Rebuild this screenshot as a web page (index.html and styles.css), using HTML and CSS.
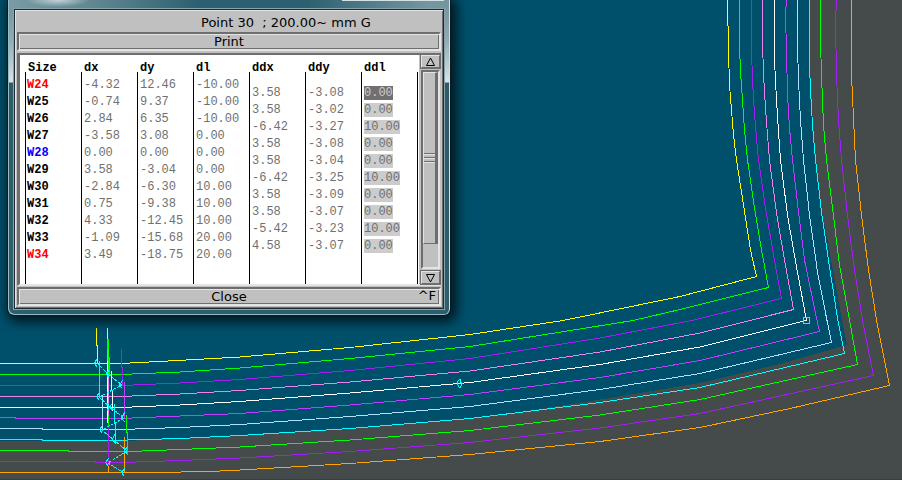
FILE: index.html
```html
<!DOCTYPE html>
<html lang="en">
<head>
    <meta charset="UTF-8">
    <meta name="viewport" content="width=device-width, initial-scale=1.0">
    <title>Point 30</title>
    <link rel="stylesheet" href="styles.css">
</head>
<body>
    <main class="workspace">
        <svg class="drawing" viewBox="0 0 902 480" preserveAspectRatio="xMinYMin slice" role="img" aria-label="Graded pattern">
            <path class="piece" d="M0 441H125L240 436L350 429L470 419L540 409L610 398L700 383L780 364L847 345L842 320L832 265L822 210L815 160L811 110L810 70V0H0Z"/>
            <path class="edge" d="M0 479.5H902"/>
            <g class="sizes">
                <path class="yellow" d="M0 363.5H121L168 361L240 357L350 347.500L470 334.500L563 320.500L680 296.500L756.500 276.500L750.500 250L743.500 205L736.500 160L733.500 135L731.500 110L729.500 85L728.500 50L727.500 0"/>
                <path class="green" d="M0 374.5H120L180 372L240 368L350 358.500L470 346.500L633 320.500L680 309.500L768.500 287.500L761.500 250L754.500 208L747.500 160L744.500 130L742.500 100L740.500 72L739.500 45V0"/>
                <path class="purple" d="M0 385.5H121L180 383L240 379.500L350 370.500L470 358.500L600 338L692 320.500L781.500 298.500L773.500 255L765.500 208L758.500 160L756.500 138L754.500 114L752.500 80L751.500 50V0"/>
                <path class="pink" d="M0 396.5H120L180 394L240 390.500L350 382L470 371L600 352L700 333L793.500 309.500L784.500 260L776.500 213L769.500 160L767.500 135L765.500 108L763.500 75L762.500 40V0"/>
                <path class="white" d="M0 407.5H120L180 405L240 401.500L350 393L470 382.500L600 364.500L700 347L806.500 320.500L796.500 267L787.500 215L780.500 160L778.500 132L776.500 100L774.500 60V0"/>
                <path class="violet" d="M0 417.5H15L16 418.5H120L180 416L240 413.500L350 405L470 394.500L600 377.500L700 360.500L819.500 331.500L816.500 318L804.500 260L798.500 212L792.500 160L789.500 128L787.500 95L786.500 50L785.500 15L786.500 0"/>
                <path class="sky" d="M0 428.500H42L43 429.500H120L180 427.500L240 424.500L350 416.500L470 406.500L600 389.500L700 373.500L831.500 342.500L826.500 318L817.500 272L809.500 215L803.500 160L800.500 120L798.500 80L797.500 45V0"/>
                <path class="cyan" d="M0 439.500H42L43 440.500H110L180 438.500L240 435.500L350 428.500L470 418.500L600 402.500L700 387.500L844.500 353.500L837.500 318L829.500 267L821.500 212L815.500 160L812.500 125L810.500 90L809.500 65V0"/>
                <path class="green" d="M0 450.500H68L69 451.500H130L180 449.500L240 447L350 440L470 430.500L600 415L700 399.500L857.500 364.500L849.500 320L839.500 265L832.500 208L826.500 160L823.500 125L821.500 75L820.500 40V0"/>
                <path class="purple" d="M0 461.500H95L96 462.500H121L180 460.500L240 458L350 451.500L470 442.500L600 428L700 413.500L780 396L873.500 375.500L862.500 320L854.500 270L847.500 215L841.500 160L838.500 120L836.500 75L835.500 22L836.500 0"/>
                <path class="orange" d="M0 472.500H152L210 471.500L240 470L350 463.500L470 454.500L600 441.500L700 427.500L790 408.500L889.500 385.500L876.500 320L868.500 270L861.500 215L855.500 160L853.500 118L851.500 75V0"/>
            </g>
            <!-- sizes at the notch -->
            <g class="notches">
                <path class="yellow" d="M96.500 328V345L97.500 346V363M107.500 328V340"/>
                <path class="pink" d="M107.500 350V361M99.500 361V397M108.500 375V425"/>
                <path class="white" d="M107.500 361V423M111.500 371V390L112.500 391V411"/>
                <path class="green" d="M107.500 339V350M108.500 339V375M109.500 357V375M108.500 416V425M126.500 415V432L127.500 433V455"/>
                <path class="purple" d="M121.500 349V367L122.500 368V386M108.500 425V466"/>
                <path class="violet" d="M124.500 382V418"/>
                <path class="sky" d="M102.500 395V431"/>
                <path class="cyan" d="M114.500 404V422L115.500 423V444"/>
                <path class="orange" d="M124.500 437V473M108.500 466V472"/>
                <path class="cyan dashed" d="M97 363L108 374L122 385L99 397L110 407L124 418L102 430L114 440L127 451L108 463L124 473"/>
                <path class="cyan" d="M96.500 359.500L94.500 363.500L97.500 367.500M108.500 370.500L106.500 374.500L109.500 378.500M122.500 380.500L119.500 385.500L122.500 388.500M99.500 392.500L96.500 396.500L99.500 400.500M107.500 403.500L109.500 407.500L106.500 411.500M111.500 404.500L109.500 407.500L112.500 410.500M124.500 412.500L121.500 418.500L125.500 422.500M102.500 425.500L99.500 429.500L102.500 433.500M114.500 434.500L112.500 439.500L115.500 443.500M127.500 446.500L124.500 450.500L127.500 454.500M108.500 458.500L105.500 462.500L108.500 466.500M124.500 468.500L121.500 472.500L124.500 476.500"/>
                <path class="cyan" d="M459.500 379.500H460.500V382.500L462.500 383.500L460.500 386.500V387.500H459.500L457.500 384.500V381.500Z"/>
                <rect class="cyan" x="803.500" y="317.500" width="6" height="6"/>
            </g>
        </svg>

        <section class="window" aria-label="Point 30">
            <div class="panel">
                <h1 class="title">Point 30&nbsp; ; 200.00~ mm G</h1>
                <button class="bar-button" type="button">Print</button>
                <div class="list">
                    <div class="sheet">
                        <table class="values">
                            <thead>
                                <tr><th>Size</th><th>dx</th><th>dy</th><th>dl</th></tr>
                            </thead>
                            <tbody>
                                <tr><th class="limit">W24</th><td>-4.32</td><td>12.46</td><td>-10.00</td></tr>
                                <tr><th>W25</th><td>-0.74</td><td>9.37</td><td>-10.00</td></tr>
                                <tr><th>W26</th><td>2.84</td><td>6.35</td><td>-10.00</td></tr>
                                <tr><th>W27</th><td>-3.58</td><td>3.08</td><td>0.00</td></tr>
                                <tr><th class="base">W28</th><td>0.00</td><td>0.00</td><td>0.00</td></tr>
                                <tr><th>W29</th><td>3.58</td><td>-3.04</td><td>0.00</td></tr>
                                <tr><th>W30</th><td>-2.84</td><td>-6.30</td><td>10.00</td></tr>
                                <tr><th>W31</th><td>0.75</td><td>-9.38</td><td>10.00</td></tr>
                                <tr><th>W32</th><td>4.33</td><td>-12.45</td><td>10.00</td></tr>
                                <tr><th>W33</th><td>-1.09</td><td>-15.68</td><td>20.00</td></tr>
                                <tr><th class="limit">W34</th><td>3.49</td><td>-18.75</td><td>20.00</td></tr>
                            </tbody>
                        </table>
                        <!-- steps between neighbouring sizes -->
                        <table class="values steps">
                            <thead>
                                <tr><th>ddx</th><th>ddy</th><th>ddl</th></tr>
                            </thead>
                            <tbody>
                                <tr><td>3.58</td><td>-3.08</td><td><mark class="selected">0.00</mark></td></tr>
                                <tr><td>3.58</td><td>-3.02</td><td><mark>0.00</mark></td></tr>
                                <tr><td>-6.42</td><td>-3.27</td><td><mark>10.00</mark></td></tr>
                                <tr><td>3.58</td><td>-3.08</td><td><mark>0.00</mark></td></tr>
                                <tr><td>3.58</td><td>-3.04</td><td><mark>0.00</mark></td></tr>
                                <tr><td>-6.42</td><td>-3.25</td><td><mark>10.00</mark></td></tr>
                                <tr><td>3.58</td><td>-3.09</td><td><mark>0.00</mark></td></tr>
                                <tr><td>3.58</td><td>-3.07</td><td><mark>0.00</mark></td></tr>
                                <tr><td>-5.42</td><td>-3.23</td><td><mark>10.00</mark></td></tr>
                                <tr><td>4.58</td><td>-3.07</td><td><mark>0.00</mark></td></tr>
                            </tbody>
                        </table>
                    </div>
                    <div class="scrollbar">
                        <button class="arrow" type="button" aria-label="Scroll up">
                            <svg viewBox="0 0 11 10"><path d="M5.500 1L9.500 8.500H1.500Z"/></svg>
                        </button>
                        <div class="track">
                            <div class="thumb"><span class="grip"></span></div>
                        </div>
                        <button class="arrow" type="button" aria-label="Scroll down">
                            <svg viewBox="0 0 11 10"><path d="M5.500 9L9.500 1.500H1.500Z"/></svg>
                        </button>
                    </div>
                </div>
                <button class="bar-button close" type="button">Close<span class="shortcut">^F</span></button>
            </div>
        </section>
    </main>
</body>
</html>
```

FILE: styles.css
```css
* {
    box-sizing: border-box;
}
body {
    margin: 0;
    background: #444b4a;
    font-family: "DejaVu Sans", Verdana, sans-serif;
    font-size: 13px;
    color: #000;
}
.workspace {
    position: relative;
    height: 100vh;
    overflow: hidden;
}

/* pattern drawing */
.drawing {
    display: block;
    width: 100%;
    height: 100%;
    fill: none;
    shape-rendering: crispEdges;
}
.piece { fill: #00506b; }
.edge { stroke: #393f3e; }
.yellow { stroke: #ffff00; }
.green { stroke: #00ff00; }
.purple { stroke: #a020f0; }
.pink { stroke: #ee82ee; }
.white { stroke: #ffffff; }
.violet { stroke: #bf3eff; }
.sky { stroke: #b0e2ff; }
.cyan { stroke: #00ffff; }
.orange { stroke: #ffa500; }
.dashed { stroke-dasharray: 3 1; }

/* window */
.window {
    position: absolute;
    top: 0;
    left: 8px;
    width: 442px;
    padding: 9px 6px 6px;
    border-radius: 0 0 6px 6px;
    background:
        linear-gradient(#d5e2e5, #d5e2e5) 334px 0 / 102px 1px no-repeat,
        radial-gradient(ellipse 32px 7px at 50px 0, #c3d2d6, transparent) no-repeat,
        linear-gradient(to right, #7a9ba5 0, #5f8690 90px, #2c6070 190px, #2c6070 300px, #7596a0 420px) 0 0 / 100% 9px no-repeat,
        linear-gradient(#6f929c 0, #8fabb3 40px, #d8e3e6 82px, #2c5c6a 83px, #2c5f6e 100%);
    box-shadow: inset 1px -1px 0 #9dbac1, inset -1px 0 0 #d0e0e4, 0 0 0 1px #0a1a20, 3px 3px 12px 4px rgba(0, 0, 0, 0.7);
}
.panel {
    padding: 1px 2px 2px;
    border: 1px solid #1c2c32;
    outline: 1px solid #86a2aa;
    background: #c0c0c0;
    box-shadow: inset 1px 1px 0 #e4e4e4, inset -1px -1px 0 #6e6e6e;
}
.title {
    margin: 0;
    padding: 3px 0 0 184px;
    line-height: 18px;
    font-size: 13px;
    font-weight: normal;
    white-space: nowrap;
}
button {
    font: inherit;
    color: inherit;
    cursor: pointer;
}
.bar-button {
    display: block;
    width: 100%;
    height: 19px;
    padding: 0;
    border: 2px solid;
    border-color: #6e6e6e #e4e4e4 #e4e4e4 #6e6e6e;
    background: #c0c0c0;
    box-shadow: inset 1px 1px 0 #e4e4e4, inset -1px -1px 0 #6e6e6e;
    line-height: 15px;
    text-align: center;
}
.close {
    position: relative;
    margin-top: 1px;
}
.shortcut {
    position: absolute;
    top: -1px;
    right: 3px;
}
.list {
    display: flex;
    margin-top: 2px;
    border-top: 2px solid #6e6e6e;
    border-left: 3px solid #6e6e6e;
    border-bottom: 2px solid #e4e4e4;
}

/* value tables */
.sheet {
    display: flex;
    flex: 1;
    padding-left: 5px;
    height: 229px;
    background:
        repeating-linear-gradient(to right, #000 0 1px, transparent 1px 56px) 5px 17px no-repeat,
        #fff;
    font-family: "Liberation Mono", "Courier New", monospace;
    font-size: 12px;
}
.values {
    align-self: flex-start;
    border-collapse: collapse;
    table-layout: fixed;
    width: 224px;
    line-height: 17px;
    color: #707070;
}
.steps {
    width: 168px;
}
.values th,
.values td {
    height: 17px;
    padding: 0 0 0 3px;
    text-align: left;
    white-space: nowrap;
}
.values th {
    padding-left: 2px;
    color: #000;
}
.values thead th {
    height: 22px;
    padding: 5px 0 0 3px;
}
.steps thead th {
    padding-bottom: 8px;
}
.values .limit { color: #ff0000; }
.values .base { color: #0000ff; }
mark {
    display: inline-block;
    line-height: 14px;
    background: #cccccc;
    color: #707070;
}
mark.selected {
    background: #707070;
    color: #cccccc;
}

/* scrollbar */
.scrollbar {
    display: flex;
    flex-direction: column;
    width: 22px;
    padding: 0 1px 0 2px;
}
.arrow {
    height: 13px;
    padding: 0;
    border: 1px solid;
    border-color: #e4e4e4 #6e6e6e #6e6e6e #e4e4e4;
    outline: 1px solid #6e6e6e;
    background: #c0c0c0;
}
.arrow svg {
    display: block;
    width: 11px;
    height: 10px;
    margin: 0 auto;
    fill: none;
    stroke: #000;
}
.track {
    flex: 1;
    margin: 2px 0;
    border: 2px solid;
    border-color: #6e6e6e #e4e4e4 #e4e4e4 #6e6e6e;
    background: #c0c0c0;
}
.thumb {
    display: flex;
    align-items: center;
    height: 88%;
    border: 1px solid #e4e4e4;
    border-right: 3px solid #6e6e6e;
    border-bottom-color: #6e6e6e;
}
.grip {
    width: 100%;
    height: 10px;
    background: repeating-linear-gradient(#6e6e6e 0 1px, #e4e4e4 1px 2px, #c0c0c0 2px 4px);
}
```
